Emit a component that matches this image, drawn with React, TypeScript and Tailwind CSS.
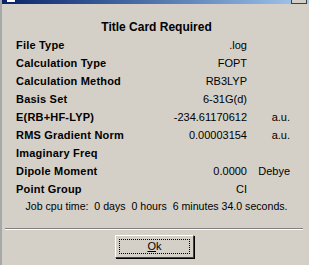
import React from 'react';

const rows: { label: string; value: string; unit?: string }[] = [
  { label: 'File Type', value: '.log' },
  { label: 'Calculation Type', value: 'FOPT' },
  { label: 'Calculation Method', value: 'RB3LYP' },
  { label: 'Basis Set', value: '6-31G(d)' },
  { label: 'E(RB+HF-LYP)', value: '-234.61170612', unit: 'a.u.' },
  { label: 'RMS Gradient Norm', value: '0.00003154', unit: 'a.u.' },
  { label: 'Imaginary Freq', value: '' },
  { label: 'Dipole Moment', value: '0.0000', unit: 'Debye' },
  { label: 'Point Group', value: 'CI' },
];

export default function App() {
  return (
    <div
      className="w-[309px] h-[265px] bg-[#d4d0c8] border-l-2 border-[#a8a8a8] flex flex-col text-[11px] text-black overflow-hidden"
      style={{ fontFamily: '"Liberation Sans", Arial, sans-serif' }}
    >
      {/* title bar, mostly cut off */}
      <div className="relative h-[4px] bg-gradient-to-r from-[#0a246a] to-[#a6caf0]">
        <div className="absolute left-[4px] -top-[6px] w-[10px] h-[9px] bg-white border border-[#0a246a]" />
        <div className="absolute right-[2px] -top-[10px] w-[16px] h-[14px] bg-[#d4d0c8] border border-[#404040]" />
      </div>

      <div className="pt-[14px] flex flex-col">
        <div className="h-[18px] flex items-center justify-center font-bold text-[12px] pl-[2px]">
          Title Card Required
        </div>
        {rows.map((r) => (
          <div key={r.label} className="h-[18px] flex items-center">
            <span className="pl-[14px] w-[150px] font-bold tracking-[0.2px]">{r.label}</span>
            <span className="w-[95px] text-right">{r.value}</span>
            <span className="w-[43px] text-right">{r.unit ?? ''}</span>
          </div>
        ))}
        <div className="h-[18px] flex items-center justify-center pl-[2px] text-[10.6px] whitespace-pre">
          Job cpu time:  0 days  0 hours  6 minutes 34.0 seconds.
        </div>
      </div>

      <div className="mt-[12px] ml-[3px] w-[298px] border-t border-[#808080] border-b border-b-white" />

      <div className="mt-[5px] flex justify-center pr-[2px]">
        <button className="w-[79px] h-[23px] bg-[#d4d0c8] border border-t-white border-l-white border-r-[#404040] border-b-[#404040] p-[3px] flex shadow-[1px_1px_0_#000]">
          <div className="flex-1 border border-dotted border-black flex items-center justify-center">
            <span>
              <span className="underline">O</span>k
            </span>
          </div>
        </button>
      </div>
    </div>
  );
}
